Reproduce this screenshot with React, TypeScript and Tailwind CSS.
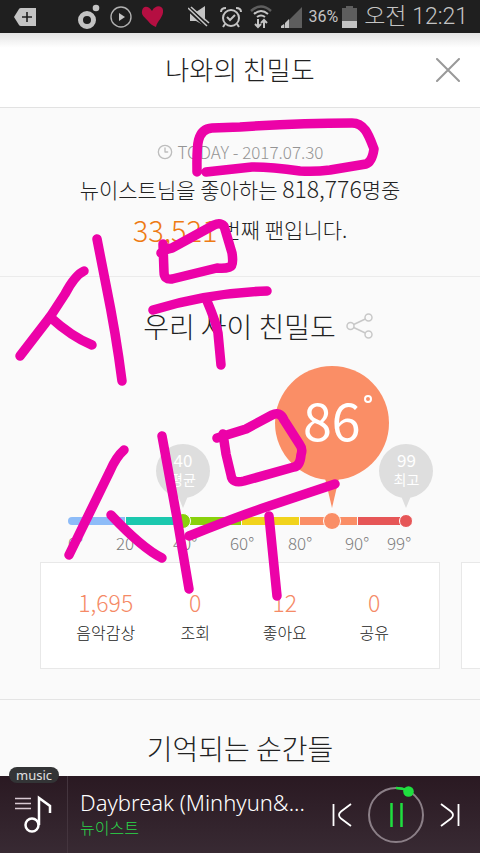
import { Clock3 } from 'lucide-react'

const segments = [
  'bg-[#8dbcf8] rounded-l-full',
  'bg-[#1bc8ae]',
  'bg-[#89d10c]',
  'bg-[#f1d31c]',
  'bg-[#fa8e66]',
  'bg-[#e65657]',
]

const degrees = [0, 20, 40, 60, 80, 90, 99]

const stats = [
  { label: '음악감상', value: '1,695' },
  { label: '조회', value: '0' },
  { label: '좋아요', value: '12' },
  { label: '공유', value: '0' },
]

const strokes = [
  'M197 172 C197 150 195 129 212 128 L240 127 Q300 123 352 123 C365 123 369 136 374 149 Q372 162 366 164 L330 170 Q315 172 300 171 Q270 167 252 167 L206 172',
  'M84 271 Q75 275 65 294 L50 317 L20 356',
  'M50 317 Q72 337 92 345',
  'M97 239 L106 285 Q116 334 122 381',
  'M161 253 Q163 250 172 248 L214 225 Q220 222 224 226 L232 253 Q234 266 230 267 Q224 269 217 268 L172 279 Q164 280 164 272 L163 244',
  'M153 310 Q208 293 267 291',
  'M207 301 Q216 322 218 333 L221 365',
  'M124 450 Q116 457 110 471 L69 555',
  'M111 515 Q142 548 162 558',
  'M162 436 L177 518 L189 589',
  'M217 438 L246 429 L272 415 Q280 411 284 420 L300 445 Q303 449 301 455 Q300 466 294 467 L244 481 Q232 484 231 475 L226 454 L223 434',
  'M189 536 Q239 516 269 506 L335 484',
  'M269 516 L277 596',
]

const StatusBar = () => (
  <div className="flex h-[33px] shrink-0 items-center justify-between bg-[#1f1f1f] pr-3 pl-[14px] text-[#c4c4c4]">
    <div className="flex items-center">
      <svg width="22" height="18" viewBox="0 0 22 18" fill="#c4c4c4">
        <path d="M0 9 5 1Q5.500 0 7 0H22V18H7Q5.500 18 5 17Z" />
        <path d="M13 4v10M8 9h10" stroke="#1f1f1f" strokeWidth="1.600" />
      </svg>
      <svg className="ml-[42px]" width="22" height="25" viewBox="0 0 22 25">
        <circle cx="9" cy="16" r="6.500" fill="none" stroke="#c4c4c4" strokeWidth="5" />
        <circle cx="18" cy="4" r="3.300" fill="#c4c4c4" />
      </svg>
      <svg className="ml-[10px]" width="22" height="22" viewBox="0 0 22 22">
        <circle cx="11" cy="11" r="10" fill="none" stroke="#b0b0b0" strokeWidth="1.400" />
        <path d="M9 7 15 11 9 15Z" fill="#c4c4c4" />
      </svg>
      <svg className="ml-[9px]" width="24" height="23" viewBox="0 0 24 23">
        <path
          d="M11 6C8 1 2 0 1 6 0 11 5 13 7 16 9 19 12 21 15 22 16 16 23 12 22 5 21 0 14 0 11 6Z"
          fill="#b50f42"
        />
      </svg>
    </div>
    <div className="flex items-center">
      <svg width="22" height="21" viewBox="0 0 22 21">
        <path d="M2 6H8L17 0V20L8 15H2Z" fill="#c4c4c4" />
        <path d="M1 3 19 20" stroke="#1f1f1f" strokeWidth="5" />
        <path d="M0 2 19 20M3 1 21 17" stroke="#c4c4c4" strokeWidth="1.600" />
      </svg>
      <svg className="ml-[10px]" width="22" height="22" viewBox="0 0 22 22" fill="none" stroke="#c4c4c4" strokeWidth="2">
        <circle cx="11" cy="12" r="8" />
        <path d="M1 6Q1 2 6 2M21 6Q21 2 16 2M5 18l-2 3M17 18l2 3M7 11l3 3 5-5" />
      </svg>
      <svg className="ml-2" width="22" height="24" viewBox="0 0 22 24" fill="none" strokeWidth="2">
        <path d="M1 6Q11-3 21 6" stroke="#5e5e5e" strokeWidth="2.500" />
        <path d="M4 9Q11 3 18 9M7 12Q11 9 15 12" stroke="#c4c4c4" />
        <path d="M8 14V22M5 19l3 3 3-3M14 23V15M11 18l3-3 3 3" stroke="#c4c4c4" />
      </svg>
      <svg className="ml-[9px]" width="22" height="22" viewBox="0 0 22 22">
        <path d="M0 22 21 1V22Z" fill="#5e5e5e" />
        <path d="M0 22V20L3 18V22ZM4 22V17L8 13V22Z" fill="#c4c4c4" />
      </svg>
      <span className="ml-[6px] font-[Roboto] text-[16px]">36%</span>
      <svg className="ml-1" width="15" height="22" viewBox="0 0 15 22">
        <path d="M4 0H11V2H15V15H0V2H4Z" fill="#5e5e5e" />
        <path d="M0 15H15V22H0Z" fill="#c4c4c4" />
      </svg>
      <span className="ml-[7px] font-[Roboto,'Noto_Sans_CJK_KR',sans-serif] text-[23px] leading-8 font-light">
        오전 12:21
      </span>
    </div>
  </div>
)

const MiniBalloon = ({ value, label, place }: { value: string; label: string; place: string }) => (
  <div className={`absolute top-[78px] flex -translate-x-1/2 flex-col items-center ${place}`}>
    <div className="flex size-[54px] flex-col items-center justify-center rounded-full bg-[#dedede] pb-1 text-white">
      <span className="text-[17px] leading-5">{value}</span>
      <span className="text-[14px] leading-[18px]">{label}</span>
    </div>
    <svg className="-mt-1" width="12" height="14" viewBox="0 0 12 14" fill="#dedede">
      <path d="M1 2H11L6 14Z" />
    </svg>
  </div>
)

const Thermometer = () => (
  <div className="relative mx-[68px] mt-5 pt-[151px]">
    <MiniBalloon value="40" label="평균" place="left-[33.4%]" />
    <MiniBalloon value="99" label="최고" place="left-[98.4%]" />
    <div className="absolute top-0 left-[76.7%] flex -translate-x-1/2 flex-col items-center">
      <div className="relative flex size-[114px] items-center justify-center rounded-full bg-[#fa8e66] pb-2 text-white">
        <span className="text-[52px] leading-none">86</span>
        <span className="absolute top-[29px] right-[17px] size-2 rounded-full border-2 border-white" />
      </div>
      <svg className="-mt-1" width="16" height="32" viewBox="0 0 16 32" fill="#fa8e66">
        <path d="M1 2H15L8 32Z" />
      </svg>
    </div>
    <div className="relative">
      <div className="grid grid-cols-[57fr_57fr_57fr_57fr_57fr_54fr] gap-px">
        {segments.map((color) => (
          <div key={color} className={`h-2 ${color}`} />
        ))}
      </div>
      <span className="absolute top-1/2 left-[33.4%] size-4 -translate-1/2 rounded-full border border-white bg-[#89d10c]" />
      <span className="absolute top-1/2 left-[76.7%] size-[18px] -translate-1/2 rounded-full border border-white bg-[#fa8e66]" />
      <span className="absolute top-1/2 left-[98.4%] size-[14px] -translate-1/2 rounded-full border border-white bg-[#e65657]" />
    </div>
    <div className="mt-2 grid grid-cols-[48fr_57fr_57fr_58fr_57fr_42fr_25fr] text-[17px] leading-5 font-light text-[#7d7d7d]">
      {degrees.map((d) => (
        <span key={d} className="whitespace-nowrap">
          {d}°
        </span>
      ))}
    </div>
  </div>
)

const Player = () => (
  <footer className="relative flex h-[77px] shrink-0 items-center bg-linear-to-b from-[#2a1922] to-[#382a33] text-white">
    <span className="absolute -top-[9px] left-[9px] rounded-full bg-[#333436] px-[7px] font-['Noto_Sans'] text-[13px] leading-4 text-[#e0e0e0]">
      music
    </span>
    <button aria-label="재생목록" className="flex h-full w-[68px] shrink-0 items-center border-r border-[#44353e] pl-[14px]">
      <svg width="38" height="40" viewBox="0 0 38 40" fill="none" stroke="#fff">
        <path d="M1 3.500H17M1 8.500H17M1 13.500H17" stroke="#d9c9d3" strokeWidth="1.500" />
        <circle cx="18" cy="30" r="6.500" strokeWidth="2.500" />
        <path d="M25 30V3L36 11V18" strokeWidth="2.500" />
      </svg>
    </button>
    <div className="min-w-0 flex-1 pb-1 pl-3">
      <div className="truncate font-['Noto_Sans'] text-[22px] leading-7 font-light">
        Daybreak (Minhyun&amp;...
      </div>
      <div className="text-[16px] leading-[22px] font-light text-[#2bd84a]">뉴이스트</div>
    </div>
    <div className="flex shrink-0 items-center pr-5 pl-4">
      <button aria-label="이전 곡">
        <svg width="20" height="24" viewBox="0 0 20 24" fill="none" stroke="#fff" strokeWidth="1.800">
          <path d="M1.500 1V23M19 1 9 8.500Q5 12 9 15.500L19 23" />
        </svg>
      </button>
      <button aria-label="일시정지" className="mx-[14px]">
        <svg width="60" height="60" viewBox="0 0 60 60" fill="none">
          <circle cx="30" cy="30" r="27" stroke="#8b7f87" strokeWidth="2" />
          <path d="M30 3A27 27 0 0 1 42.500 6" stroke="#1fdf3f" strokeWidth="2.500" />
          <circle cx="42.500" cy="6.500" r="5.300" fill="#1fdf3f" />
          <path d="M25.500 18V42M35.500 18V42" stroke="#1fdf3f" strokeWidth="2.500" />
        </svg>
      </button>
      <button aria-label="다음 곡">
        <svg width="20" height="24" viewBox="0 0 20 24" fill="none" stroke="#fff" strokeWidth="1.800">
          <path d="M18.500 1V23M1 1 11 8.500Q15 12 11 15.500L1 23" />
        </svg>
      </button>
    </div>
  </footer>
)

const App = () => {
  return (
    <div className="relative flex h-screen flex-col overflow-hidden bg-[#fafafa] font-['Noto_Sans_CJK_KR',sans-serif] text-[#222]">
      <StatusBar />
      <header className="grid h-[75px] shrink-0 grid-cols-[1fr_auto_1fr] items-center border-b border-[#e2e2e2] bg-linear-to-b from-[#e4e4e4] to-white to-20% px-5">
        <h1 className="col-start-2 pb-[2px] text-[26px] leading-10 font-light">나와의 친밀도</h1>
        <button aria-label="닫기" className="justify-self-end">
          <svg width="24" height="24" viewBox="0 0 24 24" stroke="#999" strokeWidth="2" strokeLinecap="round">
            <path d="M1 1 23 23M23 1 1 23" />
          </svg>
        </button>
      </header>

      <main className="min-h-0 flex-1 overflow-hidden">
        <section className="flex flex-col items-center border-b border-[#ebebeb] pt-8 pb-[27px] font-light">
          <p className="flex items-center gap-[5px] text-[17px] leading-6 text-[#949494]">
            <Clock3 size={16} strokeWidth={2} className="text-[#bdbdbd]" />
            TODAY - 2017.07.30
          </p>
          <p className="mt-2 text-[21px] leading-8">
            뉴이스트님을 좋아하는 <span className="text-[23px]">818,776</span>명중
          </p>
          <p className="mt-1 flex items-center gap-1 text-[21px] leading-10">
            <strong className="text-[29px] font-light text-[#ee7b14]">33,521</strong>
            번째 팬입니다.
          </p>
        </section>

        <section className="border-b border-[#e4e4e4] pt-[29px] pb-[30px]">
          <div className="flex items-center justify-center gap-[10px] pl-9">
            <h2 className="text-[28px] leading-10 font-light">우리 사이 친밀도</h2>
            <button aria-label="공유하기">
              <svg width="27" height="26" viewBox="0 0 27 26" fill="none" stroke="#c8c8c8" strokeWidth="1.500">
                <circle cx="4.500" cy="13" r="3.500" />
                <circle cx="22.500" cy="4.500" r="3.500" />
                <circle cx="22.500" cy="21.500" r="3.500" />
                <path d="M7.700 11.500 19.300 6M7.700 14.500 19.300 20" />
              </svg>
            </button>
          </div>
          <Thermometer />
          <div className="mt-[9px] ml-10 flex gap-[21px]">
            <dl className="grid w-[calc(100%-40px)] shrink-0 grid-cols-4 border border-[#e8e8e8] bg-white px-5 pt-[25px] pb-6 text-center font-light">
              {stats.map((s) => (
                <div key={s.label} className="flex flex-col-reverse gap-1">
                  <dt className="text-[16px] leading-6">{s.label}</dt>
                  <dd className="text-[23px] leading-7 text-[#f58a66]">{s.value}</dd>
                </div>
              ))}
            </dl>
            <div className="w-full shrink-0 border border-[#e8e8e8] bg-white" />
          </div>
        </section>

        <section className="pt-7 text-center">
          <h2 className="text-[28px] leading-10 font-light">기억되는 순간들</h2>
        </section>
      </main>

      <Player />

      {/* pen doodle on top of everything */}
      <svg
        className="pointer-events-none absolute top-0 left-0 z-10"
        width="480"
        height="853"
        viewBox="0 0 480 853"
        fill="none"
        stroke="#ec02a8"
        strokeWidth="9.500"
        strokeLinecap="round"
        strokeLinejoin="round"
      >
        {strokes.map((d) => (
          <path key={d} d={d} />
        ))}
      </svg>
    </div>
  )
}

export default App
